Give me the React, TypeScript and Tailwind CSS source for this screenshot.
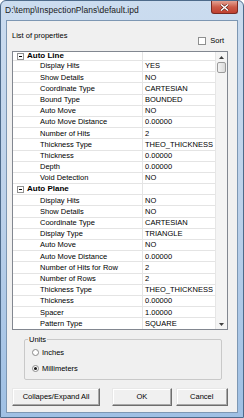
import React from "react";

type Row = { name: string; value?: string; category?: boolean };

const rows: Row[] = [
  { name: "Auto Line", category: true },
  { name: "Display Hits", value: "YES" },
  { name: "Show Details", value: "NO" },
  { name: "Coordinate Type", value: "CARTESIAN" },
  { name: "Bound Type", value: "BOUNDED" },
  { name: "Auto Move", value: "NO" },
  { name: "Auto Move Distance", value: "0.00000" },
  { name: "Number of Hits", value: "2" },
  { name: "Thickness Type", value: "THEO_THICKNESS" },
  { name: "Thickness", value: "0.00000" },
  { name: "Depth", value: "0.00000" },
  { name: "Void Detection", value: "NO" },
  { name: "Auto Plane", category: true },
  { name: "Display Hits", value: "NO" },
  { name: "Show Details", value: "NO" },
  { name: "Coordinate Type", value: "CARTESIAN" },
  { name: "Display Type", value: "TRIANGLE" },
  { name: "Auto Move", value: "NO" },
  { name: "Auto Move Distance", value: "0.00000" },
  { name: "Number of Hits for Row", value: "2" },
  { name: "Number of Rows", value: "2" },
  { name: "Thickness Type", value: "THEO_THICKNESS" },
  { name: "Thickness", value: "0.00000" },
  { name: "Spacer", value: "1.00000" },
  { name: "Pattern Type", value: "SQUARE" },
];

const PropRow: React.FC<{ row: Row; first: boolean }> = ({ row, first }) => (
  <div
    className={`flex border-b border-[#e4e4e4] ${first ? "h-[9px]" : "h-[11.2px]"}`}
  >
    <div className="w-[130px] shrink-0 border-r border-[#e4e4e4] flex items-center overflow-hidden whitespace-nowrap">
      {row.category ? (
        <>
          <span className="ml-[4px] w-[7px] h-[7px] border border-[#919191] bg-white flex items-center justify-center">
            <span className="w-[3px] h-px bg-black" />
          </span>
          <span className="ml-[3px] font-bold text-[8px]">{row.name}</span>
        </>
      ) : (
        <span className="pl-[27px]">{row.name}</span>
      )}
    </div>
    <div className="flex-1 flex items-center pl-[2px] whitespace-nowrap overflow-hidden">
      {row.value}
    </div>
  </div>
);

const Scrollbar = () => (
  <div className="w-[12px] shrink-0 bg-[#f4f4f4] border-l border-[#e6e6e6] flex flex-col">
    <div className="h-[10px] flex items-center justify-center">
      <svg width="5" height="3" viewBox="0 0 5 3">
        <path d="M0 3 L2.5 0 L5 3 Z" fill="#404040" />
      </svg>
    </div>
    <div className="h-[11px] mx-px rounded-[2px] border border-[#9b9b9b] bg-gradient-to-r from-[#f3f3f3] to-[#dadada]" />
    <div className="flex-1" />
    <div className="h-[10px] flex items-center justify-center">
      <svg width="5" height="3" viewBox="0 0 5 3">
        <path d="M0 0 L2.5 3 L5 0 Z" fill="#404040" />
      </svg>
    </div>
  </div>
);

const Radio: React.FC<{ label: string; checked?: boolean }> = ({ label, checked }) => (
  <div className="h-[11px] flex items-center">
    <span className="w-[7px] h-[7px] rounded-full border border-[#8a8a8a] bg-white flex items-center justify-center">
      {checked && <span className="w-[3px] h-[3px] rounded-full bg-[#1b1b1b]" />}
    </span>
    <span className="ml-[3px]">{label}</span>
  </div>
);

const Button: React.FC<{ label: string; width: string; extra?: string }> = ({ label, width, extra = "" }) => (
  <button
    type="button"
    className={`${width} ${extra} h-[18px] bg-[#f0f0f0] border border-t-[#e8e8e8] border-l-[#e8e8e8] border-r-[#6d6d6d] border-b-[#6d6d6d] shadow-[inset_-1px_-1px_0_#a8a8a8,inset_1px_1px_0_#ffffff] text-[7.5px] text-black`}
  >
    {label}
  </button>
);

export default function App() {
  return (
    <div
      className="w-[244px] h-[418px] flex flex-col border border-[#4d6a8a] rounded-t-[6px] bg-gradient-to-b from-[#cbdcef] via-[#bcd1ea] to-[#9fc0e4] relative overflow-hidden text-[7.5px] text-black"
      style={{ fontFamily: '"Liberation Sans", Arial, sans-serif' }}
    >
      <div className="h-[19px] shrink-0 flex items-center pl-[4px] text-[8.5px] text-[#1a1a1a]">
        D:\temp\InspectionPlans\default.ipd
      </div>
      <div className="absolute top-0 right-[5px] w-[27px] h-[13px] rounded-b-[3px] border border-t-0 border-[#7a2a22] bg-gradient-to-b from-[#e3a293] via-[#cc5b48] to-[#c0402f] flex items-center justify-center">
        <svg width="9" height="7" viewBox="0 0 9 7">
          <path d="M1 0.5 L8 6.5 M8 0.5 L1 6.5" stroke="#5a1a12" strokeWidth="2.6" />
          <path d="M1 0.5 L8 6.5 M8 0.5 L1 6.5" stroke="#ffffff" strokeWidth="1.5" />
        </svg>
      </div>

      <div className="mx-[5px] mb-[4px] flex-1 border border-[#7d97b3] bg-[#f0f0f0] flex flex-col pl-[5px] pr-[9px]">
        <div className="h-[30px] shrink-0 flex justify-between">
          <div className="pt-[10px] leading-[9px]">List of properties</div>
          <div className="mt-[15px] h-[9px] flex items-center pr-[4px]">
            <span className="w-[8px] h-[8px] border border-[#8e8f8f] bg-white" />
            <span className="ml-[4px]">Sort</span>
          </div>
        </div>

        <div className="h-[279px] shrink-0 border border-[#828790] bg-white flex overflow-hidden">
          <div className="flex-1 overflow-hidden">
            {rows.map((r, i) => (
              <PropRow key={i} row={r} first={i === 0} />
            ))}
          </div>
          <Scrollbar />
        </div>

        <fieldset className="mt-[5px] ml-[12px] w-[198px] h-[45px] shrink-0 border border-[#c9c9c9] rounded-[2px] pl-[7px] pt-[3px] flex flex-col gap-[5px]">
          <legend className="ml-[-4px] px-[1px] leading-[9px]">Units</legend>
          <Radio label="Inches" />
          <Radio label="Millimeters" checked />
        </fieldset>

        <div className="mt-[8px] flex">
          <Button label="Collapes/Expand All" width="w-[89px]" />
          <Button label="OK" width="w-[60px]" extra="ml-[12px] border-[#3c3c3c]" />
          <Button label="Cancel" width="w-[53px]" extra="ml-[4px]" />
        </div>
      </div>
    </div>
  );
}
